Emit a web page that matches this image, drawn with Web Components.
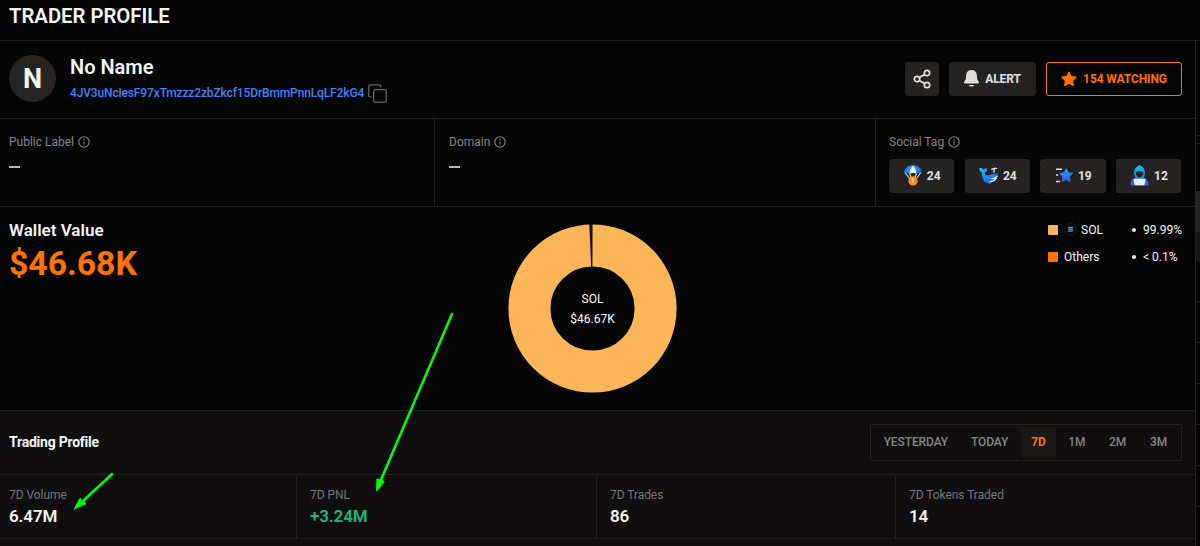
<!DOCTYPE html>
<html lang="en">
<head>
<meta charset="UTF-8">
<title>Trader Profile</title>
<style>
    body {
        margin: 0;
        background: #050505;
        color: #f5f5f5;
        font-family: Roboto, "Liberation Sans", sans-serif;
        overflow: hidden;
    }
</style>
</head>
<body>
<trader-page></trader-page>

<script>
const define = (name, html) => {
    customElements.define(name, class extends HTMLElement {
        connectedCallback() {
            if (this.shadowRoot) return;
            this.attachShadow({ mode: 'open' });
            this.shadowRoot.innerHTML = html;
        }
    });
};

const ICONS = {
    share: `<svg width="18" height="20" viewBox="0 0 18 20" fill="none" stroke="#e4e4e4" stroke-width="1.7">
        <circle cx="14" cy="4" r="2.7"/><circle cx="4" cy="10" r="2.7"/><circle cx="14" cy="16" r="2.7"/>
        <path d="M6.3 8.6l5.3-3.2M6.3 11.4l5.3 3.2"/></svg>`,
    bell: `<svg width="15" height="17" viewBox="0 0 14 17" preserveAspectRatio="none" fill="#dcdcdc">
        <path d="M7 0C3.900 0 2.200 2.100 2 5L1.700 9 .1 11.900C-.2 12.700.2 13.400 1 13.400h12c.8 0 1.200-.7.9-1.500L12.300 9 12 5C11.800 2.100 10.100 0 7 0z"/>
        <path d="M4.500 15h5c-.3 1-1.200 1.600-2.500 1.600S4.800 16 4.500 15z"/></svg>`,
    star: `<svg width="16" height="16" viewBox="0 0 16 16" fill="#ff7300" stroke="#ff7300" stroke-width="1.200" stroke-linejoin="round">
        <path d="M8 1.200l2.100 4.300 4.900.7-3.500 3.400.8 4.900L8 12.200l-4.300 2.300.8-4.900L1 6.200l4.900-.7z"/></svg>`,
    copy: `<svg width="19" height="19" viewBox="0 0 19 19" fill="none" stroke="#666" stroke-width="1.300">
        <rect x="5.700" y="5.700" width="12.500" height="12.500" rx="1.500"/>
        <path d="M3.300 12.800H2.200C1.400 12.800.8 12.200.8 11.400V2.200C.8 1.400 1.400.8 2.200.8h9.200c.8 0 1.400.6 1.400 1.400v1"/></svg>`,
    info: `<svg width="12" height="12" viewBox="0 0 12 12" fill="none" stroke="#858585" stroke-width="1.100">
        <circle cx="6" cy="6" r="5.200"/><path d="M6 5.200v3.600M6 3.200v1.100"/></svg>`,
    airdrop: `<svg width="18" height="21" viewBox="0 0 18 21">
        <defs><linearGradient id="g" x1="0" y1="0" x2="1" y2="0"><stop offset="0" stop-color="#3a6df5"/><stop offset=".45" stop-color="#19a2ff"/><stop offset="1" stop-color="#3558ec"/></linearGradient></defs>
        <path d="M1.500 8l5 7M16.500 8l-5 7M5.500 8.500l2 5M12.500 8.500l-2 5" stroke="#e9e3d8" stroke-width="1.100" fill="none"/>
        <path d="M0 8.500C0 3.500 4 .2 9 .2s9 3.300 9 8.300C16.500 7.400 14 7.500 12.500 9 11 7.700 7 7.700 5.500 9 4 7.500 1.500 7.400 0 8.500z" fill="url(#g)"/>
        <path d="M9 .8C6.800 2.700 5.600 5.500 5.700 8.800c2-1 4.600-1 6.600 0C12.400 5.500 11.200 2.700 9 .8z" fill="#e8fbff"/>
        <circle cx="9" cy="15.900" r="4.600" fill="#ff8b1f"/><path d="M8 14.200l1-.6v4.500" stroke="#ffe0a8" stroke-width="1.300" fill="none"/></svg>`,
    whale: `<svg width="19" height="18" viewBox="0 0 19 18">
        <defs><linearGradient id="g" x1="0" y1="0" x2=".7" y2="1"><stop offset="0" stop-color="#12bdf4"/><stop offset="1" stop-color="#3157f4"/></linearGradient></defs>
        <path d="M.3 1.200C2 .9 3.400 1.300 4.300 2.600 5.300 1.400 6.800 1.100 8.300 1.700 8.200 4 7.200 5.300 5.600 5.800 6 8 7.600 8.700 9.700 8.200c2.600-.6 5-1.700 8.800-1.700.4 5-2.200 8.200-6 9L10.300 17.800 8.600 15.800C4.600 15.300 3 12 2.900 6 1.200 5.100.3 3.500.3 1.200z" fill="url(#g)"/>
        <path d="M10.500 14.900c3.600-.3 5.600-1.700 7.200-4M12.400 12c2.200-.4 4.300-1.300 6-3" stroke="#dceeff" stroke-width="1.200" fill="none"/>
        <path d="M15 5.800V2.500M12.600 3c.4-1.900 2.100-1.700 2.400-.3.300-2 2.500-2 2.800-.5" stroke="#e8e8e8" stroke-width="1.300" fill="none"/></svg>`,
    shooting: `<svg width="18" height="15" viewBox="0 0 18 15">
        <defs><linearGradient id="g" x1="0" y1="0" x2="0" y2="1"><stop offset="0" stop-color="#12a5ff"/><stop offset="1" stop-color="#3f58ee"/></linearGradient></defs>
        <path d="M1 1.300h6M1 7h2.200M1 13.500h4" stroke="#ddd" stroke-width="1.400"/>
        <path d="M11.200.8l2.100 4 4.200.7-3 3.200.6 4.800-3.900-2-4 2 .7-4.700-3-3.300 4.300-.7z" fill="url(#g)" stroke="url(#g)" stroke-linejoin="round"/></svg>`,
    hacker: `<svg width="19" height="21" viewBox="0 0 19 21">
        <defs><linearGradient id="g" x1="0" y1="0" x2="0" y2="1"><stop offset="0" stop-color="#10bff4"/><stop offset=".5" stop-color="#1294ef"/><stop offset="1" stop-color="#554ce8"/></linearGradient></defs>
        <path d="M9.500 0C6 1.600 4 4.200 4 8.400L5.300 13C2 14.100.3 16.700.3 20.500h18.400c0-3.800-1.700-6.400-5-7.500L15 8.400C15 4.200 13 1.600 9.500 0z" fill="url(#g)"/>
        <path d="M5.700 7.500C8 5.500 11 5.500 13.300 7.500c-.2 3-1.700 4.500-3.800 5.300-2.100-.8-3.600-2.300-3.800-5.300z" fill="#242424"/>
        <path d="M3.400 13.700h12.200l-1.200 6.500H4.600z" fill="#e7f0ff"/></svg>`,
    solana: `<svg width="13" height="13" viewBox="0 0 13 13">
        <circle cx="6.500" cy="6.500" r="6" fill="#090a0d" stroke="#1b1b1e"/>
        <path d="M4.500 3.800h5l-1 1.700h-5z" fill="#39a5a5"/><path d="M3.500 5.500h5l1 1.700h-5z" fill="#4b78b7"/><path d="M4.500 7.200h5l-1 1.700h-5z" fill="#7058b6"/></svg>`
};

customElements.define('tp-icon', class extends HTMLElement {
    connectedCallback() {
        this.attachShadow({ mode: 'open' });
        this.shadowRoot.innerHTML = `
            <style>
                :host { display: inline-flex; flex: none; }
                svg { display: block; }
            </style>
            ${ICONS[this.getAttribute('name')]}
        `;
    }
});

define('tp-button', `
    <style>
        :host {
            display: flex;
            align-items: center;
            justify-content: center;
            box-sizing: border-box;
            height: 34px;
            border-radius: 3px;
            background: #242322;
            color: #e2e2e2;
            font-size: 12px;
            line-height: 16px;
            font-weight: 700;
            white-space: nowrap;
        }
        :host([outline]) {
            background: none;
            border: 1px solid #f47a18;
            color: #ff7300;
        }
    </style>
    <slot></slot>
`);

define('profile-header', `
    <style>
        :host {
            display: flex;
            align-items: center;
            box-sizing: border-box;
            height: 78px;
            padding: 0 13px 2px 9px;
            border-bottom: 1px solid #1f1f1f;
        }
        .avatar {
            width: 47px;
            height: 47px;
            border-radius: 50%;
            background: #262524;
            display: flex;
            align-items: center;
            justify-content: center;
            font-size: 27px;
            font-weight: 700;
        }
        .who { margin-left: 14px; flex: 1; }
        .name { font-size: 20px; line-height: 24px; font-weight: 600; padding-top: 2px; }
        .address {
            display: flex;
            align-items: center;
            gap: 4px;
            height: 22px;
            margin-top: 3px;
            font-size: 12px;
            letter-spacing: -.13px;
            font-weight: 500;
            color: #4181fa;
        }
        .actions { display: flex; gap: 10px; }
        .share { width: 34px; }
        .alert { width: 87px; gap: 6px; letter-spacing: -.1px; }
        .watch { width: 136px; gap: 6px; letter-spacing: -.1px; }
    </style>
    <div class="avatar">N</div>
    <div class="who">
        <div class="name">No Name</div>
        <div class="address"><span>4JV3uNciesF97xTmzzz2zbZkcf15DrBmmPnnLqLF2kG4</span><tp-icon name="copy"></tp-icon></div>
    </div>
    <div class="actions">
        <tp-button class="share"><tp-icon name="share"></tp-icon></tp-button>
        <tp-button class="alert"><tp-icon name="bell"></tp-icon><span>ALERT</span></tp-button>
        <tp-button class="watch" outline><tp-icon name="star"></tp-icon><span>154 WATCHING</span></tp-button>
    </div>
`);

define('label-cell', `
    <style>
        :host {
            display: block;
            box-sizing: border-box;
            padding: 15px 13px 0 14px;
            border-left: 1px solid #1f1f1f;
        }
        :host(:first-of-type) { border-left: 0; padding-left: 9px; }
        :host(:last-of-type) { padding-left: 13px; }
        .label {
            display: flex;
            align-items: center;
            gap: 4px;
            height: 16px;
            color: #858585;
            font-size: 12px;
        }
        .value { margin-top: 9px; }
    </style>
    <div class="label"><slot name="label"></slot><tp-icon name="info"></tp-icon></div>
    <div class="value"><slot></slot></div>
`);

define('profile-labels', `
    <style>
        :host {
            display: grid;
            grid-template-columns: 434px 441px 1fr;
            box-sizing: border-box;
            height: 88px;
            border-bottom: 1px solid #1f1f1f;
        }
        .dash { width: 11px; height: 2px; margin-top: 16px; background: #b5b5b5; }
        .tags { display: grid; grid-template-columns: repeat(4, 65.4px); gap: 10.2px; }
        .tags tp-button { gap: 5px; padding: 0 0 1px 1px; }
    </style>
    <label-cell><span slot="label">Public Label</span><div class="dash"></div></label-cell>
    <label-cell><span slot="label">Domain</span><div class="dash"></div></label-cell>
    <label-cell>
        <span slot="label">Social Tag</span>
        <div class="tags">
            <tp-button><tp-icon name="airdrop"></tp-icon><span>24</span></tp-button>
            <tp-button><tp-icon name="whale"></tp-icon><span>24</span></tp-button>
            <tp-button><tp-icon name="shooting"></tp-icon><span>19</span></tp-button>
            <tp-button><tp-icon name="hacker"></tp-icon><span>12</span></tp-button>
        </div>
    </label-cell>
`);

define('wallet-value', `
    <style>
        :host {
            display: grid;
            grid-template-columns: 508px 169px 1fr;
            box-sizing: border-box;
            height: 204px;
            border-bottom: 1px solid #222;
        }
        .total { padding: 13px 0 0 9px; }
        .title { font-size: 17px; line-height: 20px; font-weight: 600; }
        .amount { font-size: 33.7px; line-height: 40px; font-weight: 700; color: #ff7300; margin-top: 4px; }
        .chart { padding-top: 17px; }
        .chart svg { display: block; }
        text { font-size: 12px; fill: #fff; text-anchor: middle; }
        .legend {
            display: grid;
            grid-template-columns: 16px 64px 15px 39px;
            grid-auto-rows: 27px;
            justify-content: end;
            align-items: center;
            padding: 9px 13px 0 0;
            font-size: 12px;
            align-content: start;
            white-space: nowrap;
        }
        .swatch { width: 10px; height: 10px; border-radius: 1px; background: #fcb559; }
        .swatch.others { background: #ff7300; }
        .coin { display: flex; align-items: center; gap: 4px; }
        .bullet { width: 4px; height: 4px; border-radius: 50%; background: #eee; margin-left: 4px; }
    </style>
    <div class="total">
        <div class="title">Wallet Value</div>
        <div class="amount">$46.68K</div>
    </div>
    <div class="chart">
        <svg width="169" height="169" viewBox="0 0 169 169">
            <circle cx="84.500" cy="84.500" r="63.100" fill="none" stroke="#fcb559" stroke-width="42"/>
            <path d="M81.300 0h3.200l-.1 43h-1.200z" fill="#050505"/>
            <path d="M82.600 0h.5l.6 43h-.2z" fill="#4a3218"/>
            <text x="84.500" y="79.400">SOL</text>
            <text x="84.500" y="99.400">$46.67K</text>
        </svg>
    </div>
    <div class="legend">
        <span class="swatch"></span><span class="coin"><tp-icon name="solana"></tp-icon>SOL</span><i class="bullet"></i><span>99.99%</span>
        <span class="swatch others"></span><span>Others</span><i class="bullet"></i><span>&lt; 0.1%</span>
    </div>
`);

define('period-tabs', `
    <style>
        :host {
            display: flex;
            box-sizing: border-box;
            width: 312px;
            height: 37px;
            padding: 2px 2px 3px;
            border: 1px solid #242322;
            border-radius: 2px;
            font-size: 12px;
            letter-spacing: -.1px;
            font-weight: 500;
            color: #858585;
        }
        span { display: flex; align-items: center; justify-content: center; width: 41px; }
        .yesterday { width: 86px; }
        .today { width: 62px; }
        .active { width: 36px; background: #191817; color: #ff7300; font-weight: 700; }
    </style>
    <span class="yesterday">YESTERDAY</span><span class="today">TODAY</span><span class="active">7D</span><span>1M</span><span>2M</span><span>3M</span>
`);

define('stat-cell', `
    <style>
        :host {
            display: block;
            box-sizing: border-box;
            padding: 11px 0 0 13px;
            border-left: 1px solid #222;
            font-size: 17px;
            letter-spacing: -.1px;
            line-height: 24px;
            font-weight: 600;
        }
        :host(:first-of-type) { border-left: 0; padding-left: 9px; }
        :host([gain]) { color: #17b981; }
        .label { font-size: 12px; letter-spacing: -.05px; line-height: 18px; font-weight: 400; color: #777; }
    </style>
    <div class="label"><slot name="label"></slot></div>
    <slot></slot>
`);

define('trading-profile', `
    <style>
        :host { display: block; height: 135px; background: #100e0e; }
        .head {
            display: flex;
            align-items: center;
            justify-content: space-between;
            box-sizing: border-box;
            height: 64px;
            padding: 0 13px 0 9px;
            border-bottom: 1px solid #222;
            font-size: 14px;
            font-weight: 700;
        }
        .title { padding-bottom: 1px; letter-spacing: -.23px; }
        .stats {
            display: grid;
            grid-template-columns: 296px 300px 299px 1fr;
            box-sizing: border-box;
            height: 64px;
            border-bottom: 1px solid #222;
        }
    </style>
    <div class="head"><span class="title">Trading Profile</span><period-tabs></period-tabs></div>
    <div class="stats">
        <stat-cell><span slot="label">7D Volume</span>6.47M</stat-cell>
        <stat-cell gain><span slot="label">7D PNL</span>+3.24M</stat-cell>
        <stat-cell><span slot="label">7D Trades</span>86</stat-cell>
        <stat-cell><span slot="label">7D Tokens Traded</span>14</stat-cell>
    </div>
`);

// sliver of the neighbouring table at the right edge
define('side-table', `
    <style>
        :host { display: block; border-left: 1px solid #222; }
        div { box-sizing: border-box; border-bottom: 1px solid #1e1e1e; }
        .top { height: 95px; }
        .gap { height: 8px; }
        .head { height: 88px; border: 0; background: linear-gradient(#050505 47px, #252423 47px); }
        .sub { height: 29px; border: 0; background: #171615; }
        .row { height: 41px; }
    </style>
    <div class="top"></div><div class="gap"></div><div class="head"></div><div class="sub"></div>
    <div class="row"></div><div class="row"></div><div class="row"></div><div class="row"></div><div class="row"></div><div class="row"></div>
`);

define('annotation-arrows', `
    <style>
        :host { position: absolute; inset: 0; pointer-events: none; }
        svg { display: block; }
    </style>
    <svg width="1200" height="546" viewBox="0 0 1200 546" fill="#0f0" stroke="#0f0" stroke-linecap="round">
        <path d="M452 314L380 482M112 474L82 502" stroke-width="2.500" fill="none"/>
        <path d="M376.500 490.500l.5-11.500 3.200.5 3.800 2z" stroke-width="1"/>
        <path d="M74.500 508.500l5.500-10.300 2 2.800 3.800 2.400z" stroke-width="1"/>
    </svg>
`);

define('trader-page', `
    <style>
        :host {
            display: grid;
            grid-template-columns: 1195px 5px;
            grid-template-rows: 41px 505px;
            width: 1200px;
            height: 546px;
            position: relative;
            overflow: hidden;
        }
        h1 {
            grid-column: 1 / 3;
            box-sizing: border-box;
            margin: 0;
            padding: 4px 0 0 9px;
            border-bottom: 1px solid #1f1f1f;
            font-size: 20.3px;
            line-height: 24px;
            font-weight: 600;
        }
    </style>
    <h1>TRADER PROFILE</h1>
    <main>
        <profile-header></profile-header>
        <profile-labels></profile-labels>
        <wallet-value></wallet-value>
        <trading-profile></trading-profile>
    </main>
    <side-table></side-table>
    <annotation-arrows></annotation-arrows>
`);
</script>
</body>
</html>
